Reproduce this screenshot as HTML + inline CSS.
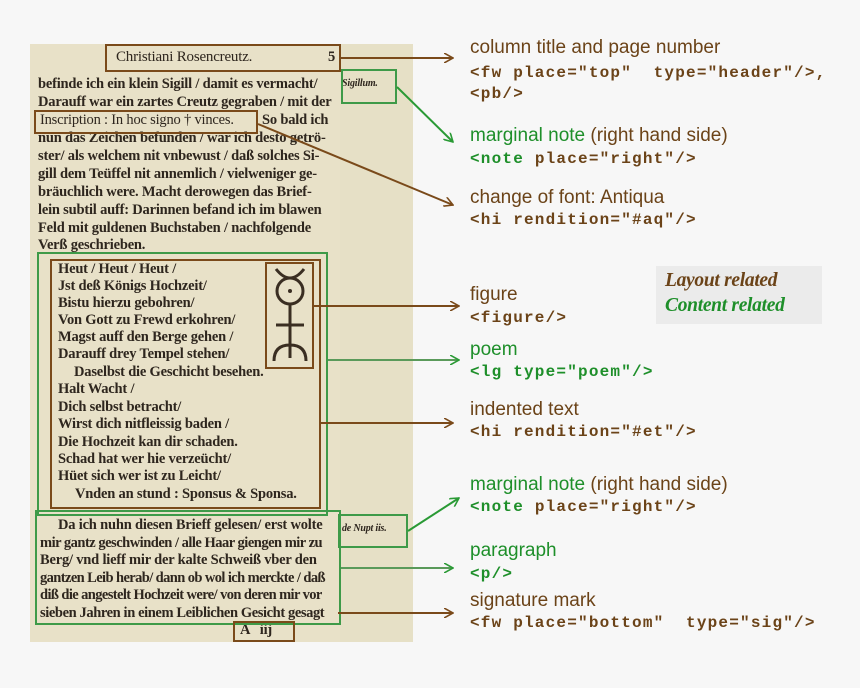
<!DOCTYPE html>
<html><head><meta charset="utf-8"><style>
body{margin:0;width:860px;height:688px;background:#f7f7f7;position:relative;overflow:hidden;font-family:"Liberation Sans",sans-serif}
.pg{position:absolute;left:30px;top:44px;width:383px;height:598px;background:#e8e1c8}
.mg{position:absolute;left:340px;top:44px;width:73px;height:598px;background:#e6e0c6}
.t{position:absolute;font-family:"Liberation Serif",serif;font-weight:bold;color:#2e261e;font-size:14.5px;white-space:nowrap;letter-spacing:-0.2px}
.b{position:absolute;border:2px solid #7a4a1a;box-sizing:border-box}
.g{position:absolute;border:2px solid #3e9a48;box-sizing:border-box}
.l{position:absolute;font-size:19px;letter-spacing:0px;white-space:nowrap;color:#6b4318}
.c{position:absolute;font-family:"Liberation Mono",monospace;font-weight:bold;font-size:16px;letter-spacing:1.2px;white-space:pre;color:#6b4318}
.gr{color:#1e8f2a}
</style></head><body>
<div class="pg"></div><div class="mg"></div>
<div class="t" style="left:116px;top:49px;font-weight:normal;font-size:15px">Christiani Rosencreutz.</div>
<div class="t" style="left:328px;top:49px">5</div>
<div class="t" style="left:38px;top:76px">befinde ich ein klein Sigill / damit es vermacht/</div>
<div class="t" style="left:38px;top:94px">Darauff war ein zartes Creutz gegraben / mit der</div>
<div class="t" style="left:40px;top:112px;font-weight:normal">Inscription : In hoc signo † vinces.</div>
<div class="t" style="left:262px;top:112px">So bald ich</div>
<div class="t" style="left:38px;top:130px">nun das Zeichen befunden / war ich desto getrö-</div>
<div class="t" style="left:38px;top:148px">ster/ als welchem nit vnbewust / daß solches Si-</div>
<div class="t" style="left:38px;top:166px">gill dem Teüffel nit annemlich / vielweniger ge-</div>
<div class="t" style="left:38px;top:184px">bräuchlich were. Macht derowegen das Brief-</div>
<div class="t" style="left:38px;top:202px">lein subtil auff: Darinnen befand ich im blawen</div>
<div class="t" style="left:38px;top:220px">Feld mit guldenen Buchstaben / nachfolgende</div>
<div class="t" style="left:38px;top:237px">Verß geschrieben.</div>
<div class="t" style="left:342px;top:78px;font-size:10px;font-style:italic">Sigillum.</div>
<div class="t" style="left:58px;top:261px">Heut / Heut / Heut /</div>
<div class="t" style="left:58px;top:278px">Jst deß Königs Hochzeit/</div>
<div class="t" style="left:58px;top:295px">Bistu hierzu gebohren/</div>
<div class="t" style="left:58px;top:312px">Von Gott zu Frewd erkohren/</div>
<div class="t" style="left:58px;top:329px">Magst auff den Berge gehen /</div>
<div class="t" style="left:58px;top:346px">Darauff drey Tempel stehen/</div>
<div class="t" style="left:74px;top:364px">Daselbst die Geschicht besehen.</div>
<div class="t" style="left:58px;top:381px">Halt Wacht /</div>
<div class="t" style="left:58px;top:399px">Dich selbst betracht/</div>
<div class="t" style="left:58px;top:416px">Wirst dich nitfleissig baden /</div>
<div class="t" style="left:58px;top:434px">Die Hochzeit kan dir schaden.</div>
<div class="t" style="left:58px;top:451px">Schad hat wer hie verzeücht/</div>
<div class="t" style="left:58px;top:468px">Hüet sich wer ist zu Leicht/</div>
<div class="t" style="left:75px;top:486px">Vnden an stund : Sponsus &amp; Sponsa.</div>
<div class="t" style="left:58px;top:517px">Da ich nuhn diesen Brieff gelesen/ erst wolte</div>
<div class="t" style="left:40px;top:535px;letter-spacing:-0.5px">mir gantz geschwinden / alle Haar giengen mir zu</div>
<div class="t" style="left:40px;top:552px">Berg/ vnd lieff mir der kalte Schweiß vber den</div>
<div class="t" style="left:40px;top:570px;letter-spacing:-0.6px">gantzen Leib herab/ dann ob wol ich merckte / daß</div>
<div class="t" style="left:40px;top:587px;letter-spacing:-0.6px">diß die angestelt Hochzeit were/ von deren mir vor</div>
<div class="t" style="left:40px;top:605px;letter-spacing:-0.4px">sieben Jahren in einem Leiblichen Gesicht gesagt</div>
<div class="t" style="left:240px;top:622px">A &nbsp; iij</div>
<div class="t" style="left:342px;top:523px;font-size:10px;font-style:italic">de Nupt iis.</div>
<svg style="position:absolute;left:266px;top:263px" width="48" height="106" viewBox="0 0 48 106"><g fill="none" stroke="#3a2e22" stroke-width="3"><path d="M10 6 Q24 24 38 6"/><circle cx="24" cy="28" r="13"/><path d="M24 41 V95 M10 62 H38 M8 98 Q8 82 24 82 Q40 82 40 98"/></g><circle cx="24" cy="28" r="2" fill="#3a2e22"/></svg>
<div class="b" style="left:105px;top:44px;width:236px;height:28px"></div>
<div class="b" style="left:34px;top:110px;width:224px;height:24px"></div>
<div class="g" style="left:341px;top:69px;width:56px;height:35px"></div>
<div class="g" style="left:37px;top:252px;width:291px;height:264px"></div>
<div class="b" style="left:50px;top:259px;width:271px;height:250px"></div>
<div class="b" style="left:265px;top:262px;width:49px;height:107px"></div>
<div class="g" style="left:338px;top:514px;width:70px;height:34px"></div>
<div class="g" style="left:35px;top:510px;width:306px;height:115px"></div>
<div class="b" style="left:233px;top:621px;width:62px;height:21px"></div>
<svg style="position:absolute;left:0;top:0" width="860" height="688">
<defs><marker id="ab" markerWidth="10" markerHeight="10" refX="9" refY="5" orient="auto" markerUnits="userSpaceOnUse"><path d="M0 0 L9 5 L0 10" fill="none" stroke="#7a4a1a" stroke-width="1.6"/></marker>
<marker id="ag" markerWidth="10" markerHeight="10" refX="9" refY="5" orient="auto" markerUnits="userSpaceOnUse"><path d="M0 0 L9 5 L0 10" fill="none" stroke="#2a9a35" stroke-width="1.6"/></marker></defs>
<g stroke-width="2" fill="none">
<path d="M341 58 H453" stroke="#7a4a1a" marker-end="url(#ab)"/>
<path d="M397 87 L453 142" stroke="#2a9a35" marker-end="url(#ag)"/>
<path d="M258 124 L453 205" stroke="#7a4a1a" marker-end="url(#ab)"/>
<path d="M314 306 H459" stroke="#7a4a1a" marker-end="url(#ab)"/>
<path d="M328 360 H459" stroke="#5a9a5a" marker-end="url(#ag)"/>
<path d="M320 423 H453" stroke="#7a4a1a" marker-end="url(#ab)"/>
<path d="M408 531 L459 498" stroke="#2a9a35" marker-end="url(#ag)"/>
<path d="M341 568 H453" stroke="#5a9a5a" marker-end="url(#ag)"/>
<path d="M338 613 H453" stroke="#7a4a1a" marker-end="url(#ab)"/>
</g></svg>
<div class="l" style="left:470px;top:37px">column title and page number</div>
<div class="c" style="left:470px;top:64px">&lt;fw place="top"  type="header"/&gt;,</div>
<div class="c" style="left:470px;top:85px">&lt;pb/&gt;</div>
<div class="l" style="left:470px;top:125px"><span class="gr">marginal note</span> (right hand side)</div>
<div class="c" style="left:470px;top:150px"><span class="gr">&lt;note</span> place="right"/&gt;</div>
<div class="l" style="left:470px;top:187px">change of font: Antiqua</div>
<div class="c" style="left:470px;top:211px">&lt;hi rendition="#aq"/&gt;</div>
<div style="position:absolute;left:656px;top:266px;width:166px;height:58px;background:#ebebeb"></div>
<div style="position:absolute;left:665px;top:270px;font-family:'Liberation Serif',serif;font-weight:bold;font-style:italic;font-size:19.5px;color:#6b4318;letter-spacing:-0.3px">Layout related</div>
<div style="position:absolute;left:665px;top:295px;font-family:'Liberation Serif',serif;font-weight:bold;font-style:italic;font-size:19.5px;color:#1e8f2a;letter-spacing:-0.3px">Content related</div>
<div class="l" style="left:470px;top:284px">figure</div>
<div class="c" style="left:470px;top:309px">&lt;figure/&gt;</div>
<div class="l gr" style="left:470px;top:339px">poem</div>
<div class="c gr" style="left:470px;top:363px">&lt;lg type="poem"/&gt;</div>
<div class="l" style="left:470px;top:399px">indented text</div>
<div class="c" style="left:470px;top:423px">&lt;hi rendition="#et"/&gt;</div>
<div class="l" style="left:470px;top:474px"><span class="gr">marginal note</span> (right hand side)</div>
<div class="c" style="left:470px;top:498px"><span class="gr">&lt;note</span> place="right"/&gt;</div>
<div class="l gr" style="left:470px;top:540px">paragraph</div>
<div class="c gr" style="left:470px;top:565px">&lt;p/&gt;</div>
<div class="l" style="left:470px;top:590px">signature mark</div>
<div class="c" style="left:470px;top:614px">&lt;fw place="bottom"  type="sig"/&gt;</div>
</body></html>
